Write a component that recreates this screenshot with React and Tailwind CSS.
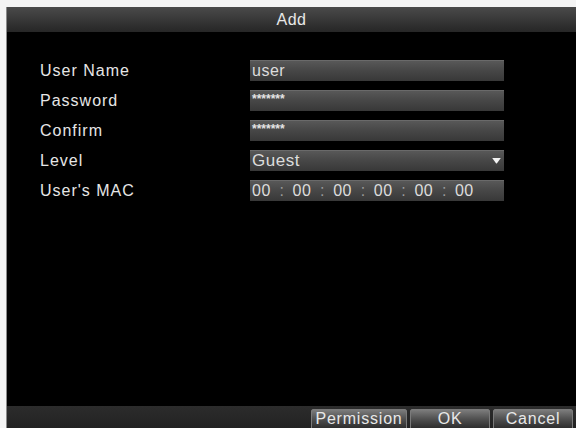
import React from "react";

const font = { fontFamily: '"Liberation Sans", Arial, sans-serif' };

function Field({ children }) {
  return (
    <div className="relative flex h-[21px] w-[254px] items-center bg-gradient-to-b from-[#5a5a5a] via-[#474747] to-[#383838] pl-[2px] text-[16px] leading-[21px] tracking-[0.5px] text-[#dcdcdc] shadow-[inset_0_1px_0_#6a6a6a]">
      {children}
    </div>
  );
}

function Row({ label, children }) {
  return (
    <div className="flex h-[21px] items-center">
      <div className="w-[210px] text-[16px] leading-[21px] tracking-[1px] text-[#e6e6e6]">{label}</div>
      {children}
    </div>
  );
}

function Btn({ children, w }) {
  return (
    <div
      className={`flex h-[20px] ${w} items-center justify-center rounded-t-[2px] border border-[#7a7a7a] bg-gradient-to-b from-[#7c7c7c] via-[#505050] to-[#2e2e2e] text-[16px] leading-[18px] tracking-[0.8px] text-[#e8e8e8]`}
    >
      {children}
    </div>
  );
}

export default function App() {
  const macs = ["00", "00", "00", "00", "00", "00"];
  return (
    <div className="h-[428px] w-[576px] overflow-hidden bg-[#f4f4f4] pl-[6px] pt-[7px]" style={font}>
      <div className="flex h-[421px] flex-col border-l border-[#8a8a8a] bg-black">
        <div className="flex h-[25px] items-center justify-center bg-gradient-to-b from-[#4a4a4a] via-[#383838] to-[#262626] text-[16px] tracking-[0.5px] text-[#e8e8e8]">
          Add
        </div>
        <div className="flex flex-1 flex-col gap-[9px] pl-[33px] pt-[28px]">
          <Row label="User Name">
            <Field>user</Field>
          </Row>
          <Row label="Password">
            <Field>
              <span className="pb-[3px] text-[12px] font-bold tracking-[0px] text-[#e4e4e4]">*******</span>
            </Field>
          </Row>
          <Row label="Confirm">
            <Field>
              <span className="pb-[3px] text-[12px] font-bold tracking-[0px] text-[#e4e4e4]">*******</span>
            </Field>
          </Row>
          <Row label="Level">
            <Field>
              <span className="text-[17px]">Guest</span>
              <svg className="absolute right-[3px] top-[8px]" width="9" height="6" viewBox="0 0 10 7">
                <path d="M0 0 L10 0 L5.6 6 Q5 6.8 4.4 6 Z" fill="#f2f2f2" />
              </svg>
            </Field>
          </Row>
          <Row label="User's MAC">
            <Field>
              <div className="flex">
                {macs.map((m, i) => (
                  <div key={i} className="flex w-[40.6px] items-center">
                    <span className="w-[20px]">{m}</span>
                    {i < 5 && <span className="w-[20px] text-center text-[#9a9a9a]">:</span>}
                  </div>
                ))}
              </div>
            </Field>
          </Row>
        </div>
        <div className="flex h-[22px] items-start justify-end gap-[3px] bg-gradient-to-b from-[#2c2c2c] to-[#222] pr-[3px] pt-[3px]">
          <Btn w="w-[96px]">Permission</Btn>
          <Btn w="w-[80px]">OK</Btn>
          <Btn w="w-[80px]">Cancel</Btn>
        </div>
      </div>
    </div>
  );
}
